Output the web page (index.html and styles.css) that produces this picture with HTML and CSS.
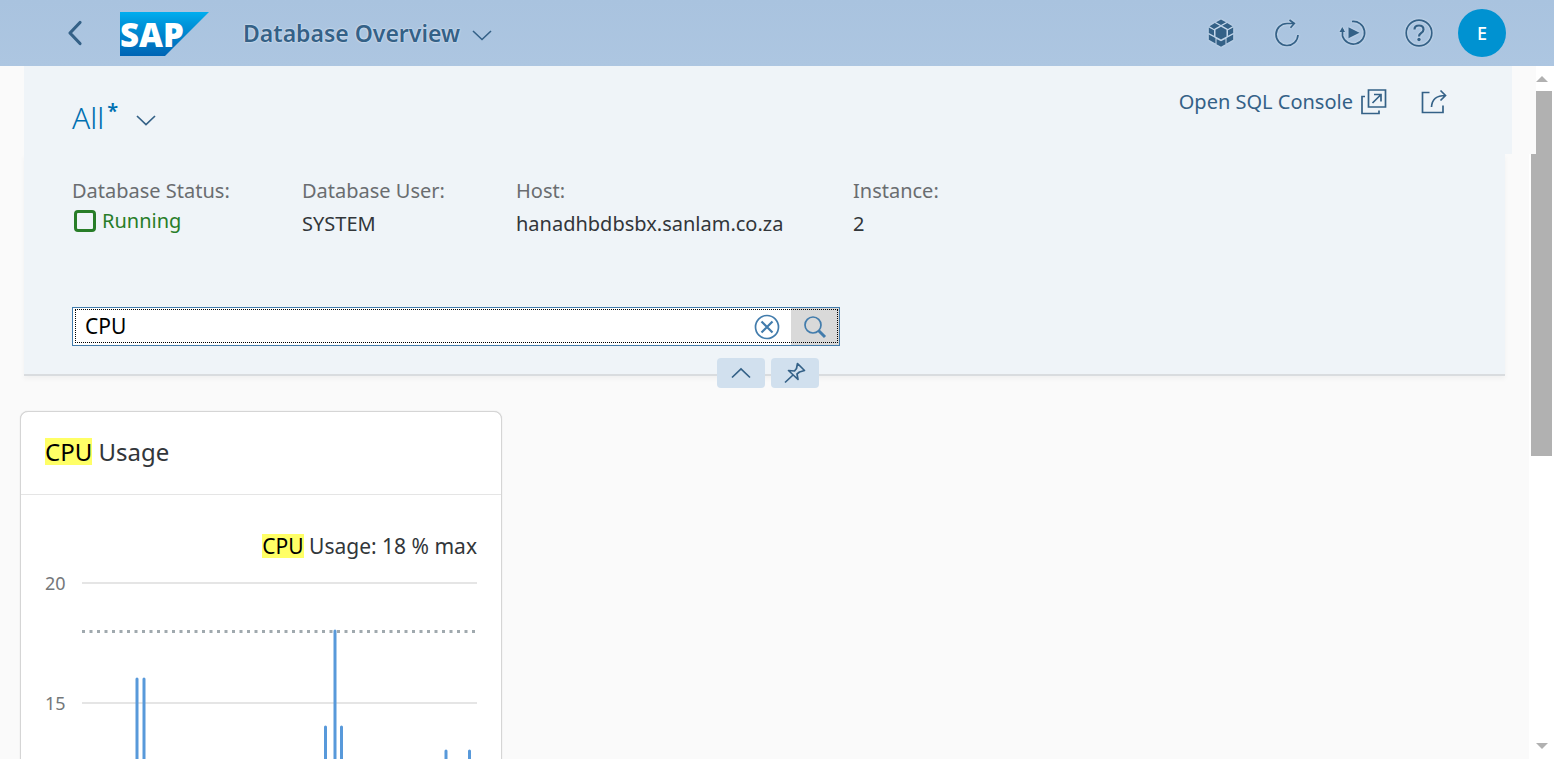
FILE: index.html
```html
<!DOCTYPE html>
<html lang="en">
<head>
<meta charset="utf-8">
<title>Database Overview</title>
<link rel="stylesheet" href="styles.css">
</head>
<body>
<header class="shell">
  <button class="icon-btn back" aria-label="Back"><svg width="16" height="26" viewBox="0 0 16 26"><path d="M13 2.500 3 13 13 23.500" fill="none" stroke="currentColor" stroke-width="3.200" stroke-linecap="round" stroke-linejoin="round"/></svg></button>
  <svg class="logo" width="89" height="44" viewBox="0 0 89 44" role="img" aria-label="SAP">
    <defs><linearGradient id="sap" x1="0" y1="0" x2="0" y2="1"><stop offset="0" stop-color="#00aeef"/><stop offset=".25" stop-color="#0097dc"/><stop offset="1" stop-color="#0064b4"/></linearGradient></defs>
    <path d="M0 0H89L45 44H0Z" fill="url(#sap)"/>
    <text class="logo-text" x="0" y="35">SAP</text>
  </svg>
  <button class="app-title"><span>Database Overview</span><svg width="20" height="12" viewBox="0 0 20 12"><path d="M1 2 10 10.500 19 2" fill="none" stroke="currentColor" stroke-width="1.600"/></svg></button>
  <nav class="shell-actions" aria-label="Shell actions">
    <button class="icon-btn" aria-label="Products"><svg width="26" height="28" viewBox="0 0 26 28" fill="currentColor"><path d="M13 .500 18 3.300 13 6 8 3.300ZM6.800 4 11.800 6.800 6 10 1.500 7.200ZM19.200 4 24.500 7.200 20 10 14.200 6.800ZM13 7.700 18.500 10.800V17.400L13 20.500 7.500 17.400V10.800ZM.800 8.400 6 11.300V16.700L.800 14ZM25.200 8.400 20 11.300V16.700L25.200 14ZM.800 15.500 6 18.300 7.500 19.200V24.500L.800 20.800ZM25.200 15.500 20 18.300 18.500 19.200V24.500L25.200 20.800ZM8.500 20 13 22.300 17.500 20V25.200L13 27.700 8.500 25.200Z"/></svg></button>
    <button class="icon-btn" aria-label="Refresh"><svg width="26" height="28" viewBox="0 0 26 28"><path d="M24 16A11 11 0 1 1 13 4.500H20M15.500 1 20.300 4.500 16.500 8.700" fill="none" stroke="currentColor" stroke-width="1.700"/></svg></button>
    <button class="icon-btn" aria-label="Auto refresh"><svg width="28" height="28" viewBox="0 0 28 28"><path d="M13 2.500A11.300 11.300 0 1 1 3.500 17V10" fill="none" stroke="currentColor" stroke-width="1.700"/><path d="M.5 13 3.300 8 6 13ZM9.500 8.300 20.500 13.700 9.500 19.300Z" fill="currentColor"/></svg></button>
    <button class="icon-btn" aria-label="Help"><svg width="28" height="28" viewBox="0 0 28 28"><circle cx="14" cy="14" r="12.800" fill="none" stroke="currentColor" stroke-width="1.700"/><path d="M9.500 10.500Q9.500 6.500 14 6.500T18.500 10.500Q18.500 12.600 16.200 14T14 17.500" fill="none" stroke="currentColor" stroke-width="2.200"/><circle cx="14" cy="20.500" r="1.700" fill="currentColor"/></svg></button>
    <button class="avatar" aria-label="User E">E</button>
  </nav>
</header>
<main class="page">
  <div class="title-row">
    <div class="title-bar">
      <button class="variant"><span>All<sup>*</sup></span><svg width="20" height="12" viewBox="0 0 20 12"><path d="M1 2 10 10.500 19 2" fill="none" stroke="currentColor" stroke-width="1.700"/></svg></button>
      <div class="page-actions">
        <a class="console-link" href="#"><span>Open SQL Console</span><svg width="26" height="26" viewBox="0 0 26 26" fill="none" stroke="currentColor" stroke-width="1.700"><path d="M7.500 1H24.500V18H7.500ZM4 7.500H1V24.500H18V21.500M11.500 14 19.500 6M13 5.500H20V12.500"/></svg></a>
        <button class="icon-btn" aria-label="Share"><svg width="26" height="26" viewBox="0 0 26 26" fill="none" stroke="currentColor" stroke-width="1.700"><path d="M8.500 3.500H1.500V23.500H22V16.500M10.500 18C11 10 15 6.500 24.500 6.500M19.500 1.500 24.500 6.500 19.500 11.500"/></svg></button>
      </div>
    </div>
    <div class="scroll-top" aria-hidden="true"><svg width="12" height="6" viewBox="0 0 12 6"><path d="M0 6 6 0 12 6Z"/></svg><div class="thumb"></div></div>
  </div>
  <div class="body-row">
    <div class="content">
      <section class="details">
        <dl class="facts">
          <div class="fact fact-status"><dt>Database Status:</dt><dd class="running"><span class="status-box"></span>Running</dd></div>
          <div class="fact fact-user"><dt>Database User:</dt><dd>SYSTEM</dd></div>
          <div class="fact fact-host"><dt>Host:</dt><dd>hanadhbdbsbx.sanlam.co.za</dd></div>
          <div class="fact"><dt>Instance:</dt><dd>2</dd></div>
        </dl>
        <form class="search">
          <input type="text" value="CPU" aria-label="Search">
          <button type="button" class="clear" aria-label="Clear"><svg width="26" height="26" viewBox="0 0 26 26" fill="none" stroke="currentColor"><circle cx="13" cy="13" r="11.500" stroke-width="1.700"/><path d="M7.500 7.500 18.500 18.500M18.500 7.500 7.500 18.500" stroke-width="2.200"/></svg></button>
          <button type="button" class="go" aria-label="Search"><svg width="24" height="24" viewBox="0 0 24 24" fill="none" stroke="currentColor"><circle cx="10" cy="10" r="8" stroke-width="1.700"/><path d="M15.500 15.500 22 22" stroke-width="3"/></svg></button>
        </form>
        <div class="header-tools">
          <button aria-label="Collapse header"><svg width="20" height="12" viewBox="0 0 20 12"><path d="M1 10.500 10 2 19 10.500" fill="none" stroke="currentColor" stroke-width="1.700"/></svg></button>
          <button aria-label="Pin header"><svg width="22" height="22" viewBox="0 0 22 22" fill="none" stroke="currentColor" stroke-width="1.700" stroke-linejoin="round"><path d="M13.500 1.500 20.500 8.500 15.500 10 13 12 14 17.500 4.500 8.500 10.500 9 12.500 6.500ZM9 13 1 20.500"/></svg></button>
        </div>
      </section>
      <article class="card">
        <h2><mark>CPU</mark> Usage</h2>
        <p class="card-info"><mark>CPU</mark> Usage: 18 % max</p>
        <svg class="chart" viewBox="0 0 432 260" role="img" aria-label="CPU usage chart">
          <g stroke="#e5e5e5" stroke-width="2"><path d="M37 15H432M37 135H432M37 255H432"/></g>
          <path d="M37 63.500H432" stroke="#a0a9ae" stroke-width="3" stroke-dasharray="3 4.500"/>
          <g stroke="#5899da" stroke-width="3" stroke-linecap="round"><path d="M92 111V260M99 111V260M280.500 159V260M290 63V260M296.500 159V260M401 183V260M424.500 183V260"/></g>
          <g class="axis"><text x="0" y="22">20</text><text x="0" y="142">15</text></g>
        </svg>
      </article>
    </div>
    <div class="scroll-main" aria-hidden="true"><div class="thumb"></div><svg width="12" height="6" viewBox="0 0 12 6"><path d="M0 0 6 6 12 0Z"/></svg></div>
  </div>
</main>
</body>
</html>
```
FILE: styles.css
```css
* { box-sizing: border-box; }
body {
  margin: 0;
  height: 100vh;
  display: flex;
  flex-direction: column;
  overflow: hidden;
  background: #fafafa;
  color: #32363a;
  font: 20px/24px "Noto Sans", "Open Sans", sans-serif;
}
button, input { font: inherit; color: inherit; }
button { padding: 0; border: 0; background: none; cursor: pointer; }
svg { display: block; flex: none; }

.shell {
  flex: none;
  display: flex;
  align-items: center;
  height: 66px;
  padding: 0 48px 0 60px;
  background: linear-gradient(#a9c3df, #adc6e1);
  color: #346187;
}
.icon-btn { display: grid; place-items: center; }
.back { width: 30px; height: 48px; margin-right: 30px; }
.logo { margin-top: 2px; }
.logo-text { font: 800 33px "Open Sans", sans-serif; fill: #fff; }
.app-title {
  display: flex;
  align-items: center;
  gap: 12px;
  margin-left: 34px;
  font-size: 23px;
  font-weight: 600;
  text-shadow: 0 0 2px #fff;
}
.app-title svg { margin-top: 4px; }
.shell-actions { display: flex; align-items: center; margin-left: auto; }
.shell-actions .icon-btn { width: 66px; height: 48px; filter: drop-shadow(0 0 1px #dbe7f3); }
.avatar {
  width: 48px;
  height: 48px;
  margin-left: 6px;
  border-radius: 50%;
  background: #0092d1;
  color: #fff;
  font-size: 18px;
  font-weight: 500;
}

.page { flex: 1; min-height: 0; display: flex; flex-direction: column; }
.title-row { flex: none; display: flex; height: 88px; }
.title-bar {
  flex: 1;
  display: flex;
  justify-content: space-between;
  align-items: flex-start;
  margin: 0 24px;
  padding: 23px 65px 0 48px;
  background: #eff4f8;
}
.variant {
  display: flex;
  align-items: center;
  gap: 18px;
  padding-top: 11px;
  color: #0070b1;
  font-size: 30px;
  font-weight: 300;
  line-height: 36px;
}
.variant svg { color: #346187; margin-top: 3px; }
.variant sup { font-size: 20px; line-height: 1px; font-weight: 600; margin-left: 3px; }
.page-actions { display: flex; align-items: center; gap: 34px; color: #346187; }
.console-link { display: flex; align-items: center; gap: 8px; color: inherit; text-decoration: none; }

.scroll-top { width: 18px; padding-right: 2px; background: #fff; fill: #b1b1b1; }
.scroll-top svg { margin: 10px 0 9px; }
.thumb { background: #b1b1b1; }
.scroll-top .thumb { height: 63px; }

.body-row { flex: 1; min-height: 0; display: flex; }
.content { flex: 1; min-width: 0; overflow: hidden; }
.scroll-main {
  width: 25px;
  display: flex;
  flex-direction: column;
  justify-content: space-between;
  padding: 0 2px 10px;
  background: #fff;
  fill: #b1b1b1;
}
.scroll-main .thumb { height: 302px; }
.scroll-main svg { margin-left: 5px; }

.details {
  position: relative;
  margin: 0 24px;
  padding: 25px 48px 28px;
  background: #eff4f8;
  border-bottom: 2px solid #d9dcdf;
  box-shadow: 0 3px 5px rgba(0, 0, 0, .04);
}
.facts { display: flex; margin: 0; }
.fact-status { width: 230px; }
.fact-user { width: 214px; }
.fact-host { width: 337px; }
dt { color: #6a6d70; }
dd { margin: 9px 0 0; }
.running { display: flex; align-items: center; gap: 6px; margin-top: 6px; color: #287d28; }
.status-box { width: 22px; height: 22px; margin-left: 2px; border: 3px solid; border-radius: 4px; }

.search {
  position: relative;
  display: flex;
  max-width: 768px;
  height: 39px;
  margin-top: 71px;
  border: 1px solid #427cac;
  background: #fff;
  color: #427cac;
}
.search::after {
  content: "";
  position: absolute;
  inset: 1px 1px 2px 2px;
  border: 1px dotted #000;
  pointer-events: none;
}
.search input { flex: 1; min-width: 0; border: 0; outline: 0; padding: 0 12px 2px; background: none; color: #000; font-size: 21px; }
.clear, .go { width: 48px; display: grid; place-items: center; }
.go { background: #d9d9d9; }

.header-tools {
  position: absolute;
  left: 7px;
  right: 0;
  bottom: -14px;
  display: flex;
  justify-content: center;
  gap: 6px;
  color: #346187;
}
.header-tools button {
  display: grid;
  place-items: center;
  width: 48px;
  height: 30px;
  border-radius: 4px;
  background: #d1e0ee;
}

.card {
  width: 482px;
  margin: 35px 0 0 20px;
  border: 1px solid #d5d5d5;
  border-radius: 8px;
  background: #fff;
  box-shadow: 0 0 1px #ccc;
}
.card h2 {
  margin: 0;
  padding: 24px 24px 26px;
  border-bottom: 1px solid #e5e5e5;
  font-size: 24px;
  font-weight: 400;
  line-height: 32px;
}
mark { display: inline-block; background: #ffff66; color: #000; line-height: 27px; }
.card-info { margin: 0; padding: 39px 24px 0; font-size: 21px; text-align: right; }
.card-info mark { line-height: 24px; }
.chart { width: 432px; margin: 10px 24px 0; }
.axis { font-size: 18px; fill: #74777a; }
```
